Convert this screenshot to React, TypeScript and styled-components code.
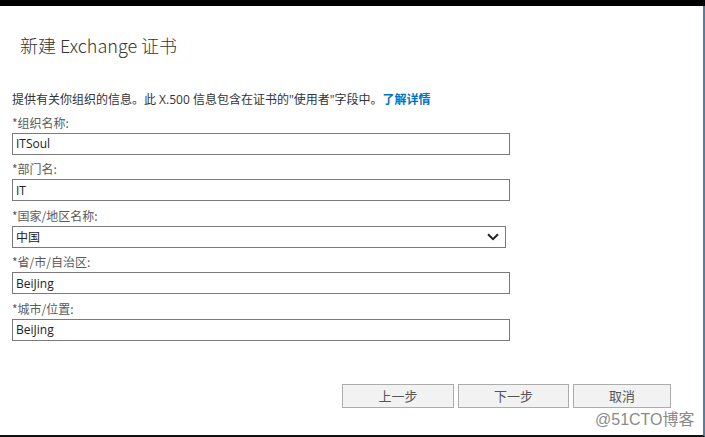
import React from "react";
import styled, { createGlobalStyle } from "styled-components";

const Global = createGlobalStyle`
  html, body { margin: 0; padding: 0; background: #ffffff; }
  body { font-family: "Open Sans", "Noto Sans CJK SC", sans-serif; }
`;

const Frame = styled.div`
  width: 705px;
  height: 437px;
  display: flex;
  flex-direction: column;
  box-sizing: border-box;
  position: relative;
  overflow: hidden;
  background: #fff;
`;

const TopBar = styled.div`
  height: 6px;
  background: #000;
  flex: none;
`;

const Body = styled.div`
  flex: 1;
  display: flex;
  flex-direction: column;
  border-right: 2px solid #4f7fa3;
  border-bottom: 2px solid #111;
  box-sizing: border-box;
`;

const Title = styled.h1`
  margin: 27px 0 0 20px;
  font-family: "Noto Sans CJK SC", sans-serif;
  font-weight: 300;
  font-size: 18px;
  line-height: 24px;
  height: 24px;
  color: #333;
`;

const Content = styled.div`
  padding: 35px 0 0 12px;
  display: flex;
  flex-direction: column;
`;

const Desc = styled.p`
  margin: 0;
  height: 16px;
  font-family: "Open Sans", "Noto Sans CJK SC", sans-serif;
  font-size: 12px;
  line-height: 16px;
  color: #333;
`;

const Link = styled.a`
  color: #0072c6;
  font-weight: 700;
  text-decoration: none;
`;

const Label = styled.div`
  height: 24.5px;
  box-sizing: border-box;
  padding: 6.5px 0 2px;
  font-family: "Noto Sans CJK SC", sans-serif;
  font-size: 12px;
  line-height: 16px;
  color: #5a5a5a;
`;

const Field = styled.div<{ $w: number }>`
  width: ${(p) => p.$w}px;
  height: 22px;
  flex: none;
  box-sizing: border-box;
  border: 1px solid #7a7a7a;
  display: flex;
  align-items: center;
  justify-content: space-between;
  padding: 0 6px 0 3px;
  font-family: "Open Sans", "Noto Sans CJK SC", sans-serif;
  font-size: 12px;
  color: #222;
`;

const Buttons = styled.div`
  margin-top: 43px;
  margin-left: 342px;
  display: flex;
  gap: 4px;
`;

const Button = styled.button<{ $w: number }>`
  width: ${(p) => p.$w}px;
  height: 24px;
  background: #f2f2f2;
  border: 1px solid #acacac;
  font-family: "Noto Sans CJK SC", sans-serif;
  font-size: 13px;
  color: #555;
  padding: 0;
`;

const Watermark = styled.div`
  position: absolute;
  left: 595px;
  top: 409px;
  font-family: "Liberation Sans", "Noto Sans CJK SC", sans-serif;
  font-size: 16px;
  line-height: 22px;
  color: #8a8a8a;
  text-shadow: 0 0 2px #fff;
`;

const Chevron = () => (
  <svg width="12" height="8" viewBox="0 0 12 8">
    <path d="M1 1.2 L6 6.2 L11 1.2" fill="none" stroke="#222" strokeWidth="2" />
  </svg>
);

const fields: { label: string; value: string; select?: boolean }[] = [
  { label: "*组织名称:", value: "ITSoul" },
  { label: "*部门名:", value: "IT" },
  { label: "*国家/地区名称:", value: "中国", select: true },
  { label: "*省/市/自治区:", value: "BeiJing" },
  { label: "*城市/位置:", value: "BeiJing" },
];

export default function App() {
  return (
    <Frame>
      <Global />
      <TopBar />
      <Body>
        <Title>新建 Exchange 证书</Title>
        <Content>
          <Desc>
            提供有关你组织的信息。此 X.500 信息包含在证书的"使用者"字段中。
            <Link href="#">了解详情</Link>
          </Desc>
          {fields.map((f) => (
            <React.Fragment key={f.label}>
              <Label>{f.label}</Label>
              <Field $w={f.select ? 494 : 498}>
                <span>{f.value}</span>
                {f.select && <Chevron />}
              </Field>
            </React.Fragment>
          ))}
        </Content>
        <Buttons>
          <Button $w={112}>上一步</Button>
          <Button $w={111}>下一步</Button>
          <Button $w={98}>取消</Button>
        </Buttons>
      </Body>
      <Watermark>@51CTO博客</Watermark>
    </Frame>
  );
}
